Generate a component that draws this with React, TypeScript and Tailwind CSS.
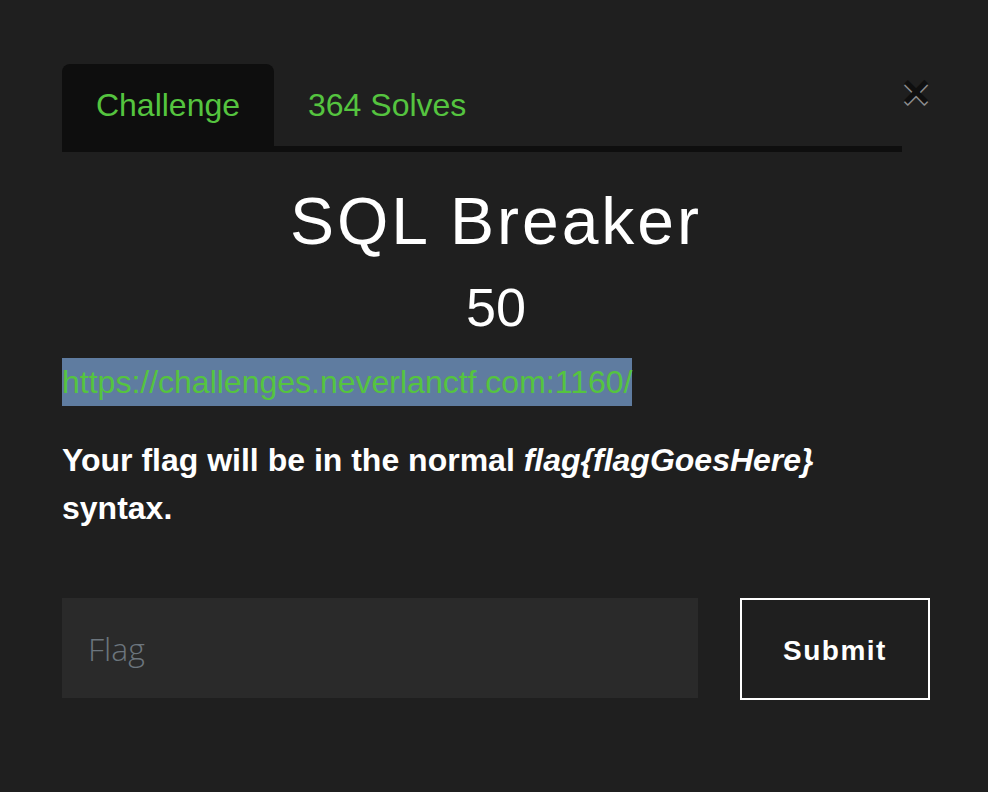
import React from 'react';

export default function App() {
  return (
    <div className="min-h-screen w-full bg-[#1f1f1f] text-white font-['Liberation_Sans',Arial,sans-serif]">
      <div className="relative ml-[62px] w-[868px] pt-[64px]">
        {/* tabs */}
        <div className="flex w-[840px] border-b-[6px] border-[#0e0e0e]">
          <div className="flex h-[82px] w-[212px] items-center justify-center rounded-t-[8px] bg-[#0e0e0e] text-[32px] text-[#55c43f]">
            Challenge
          </div>
          <div className="flex h-[82px] items-center px-[34px] text-[32px] text-[#55c43f]">364 Solves</div>
        </div>
        <button className="absolute left-[840px] top-[68px] text-[48px] font-bold leading-none text-black opacity-50 [text-shadow:0_2px_0_#fff]">
          ×
        </button>

        <h1 className="mt-[30px] text-center text-[66px] leading-[78px] tracking-[3px]">SQL Breaker</h1>
        <div className="mt-[15px] text-center text-[54px] leading-[65px]">50</div>

        <div className="mt-[18px] text-[32px] leading-[48px]">
          <span className="inline-block bg-[#5f7ca0] text-[#55c43f]">https://challenges.neverlanctf.com:1160/</span>
        </div>

        <p className="mt-[30px] text-[32px] font-bold leading-[48px]">
          Your flag will be in the normal <em>flag{'{'}flagGoesHere{'}'}</em> syntax.
        </p>

        <div className="mt-[66px] flex items-start">
          <input
            placeholder="Flag"
            className="h-[100px] w-[636px] bg-[#2a2a2a] pl-[26px] font-['Open_Sans',sans-serif] text-[32px] font-light text-white outline-none placeholder:text-[#6c757d]"
          />
          <button className="ml-[42px] flex h-[102px] w-[190px] items-center justify-center border-2 border-white pt-[4px] text-[28px] font-bold tracking-[1.5px] text-white">
            Submit
          </button>
        </div>
      </div>
    </div>
  );
}
